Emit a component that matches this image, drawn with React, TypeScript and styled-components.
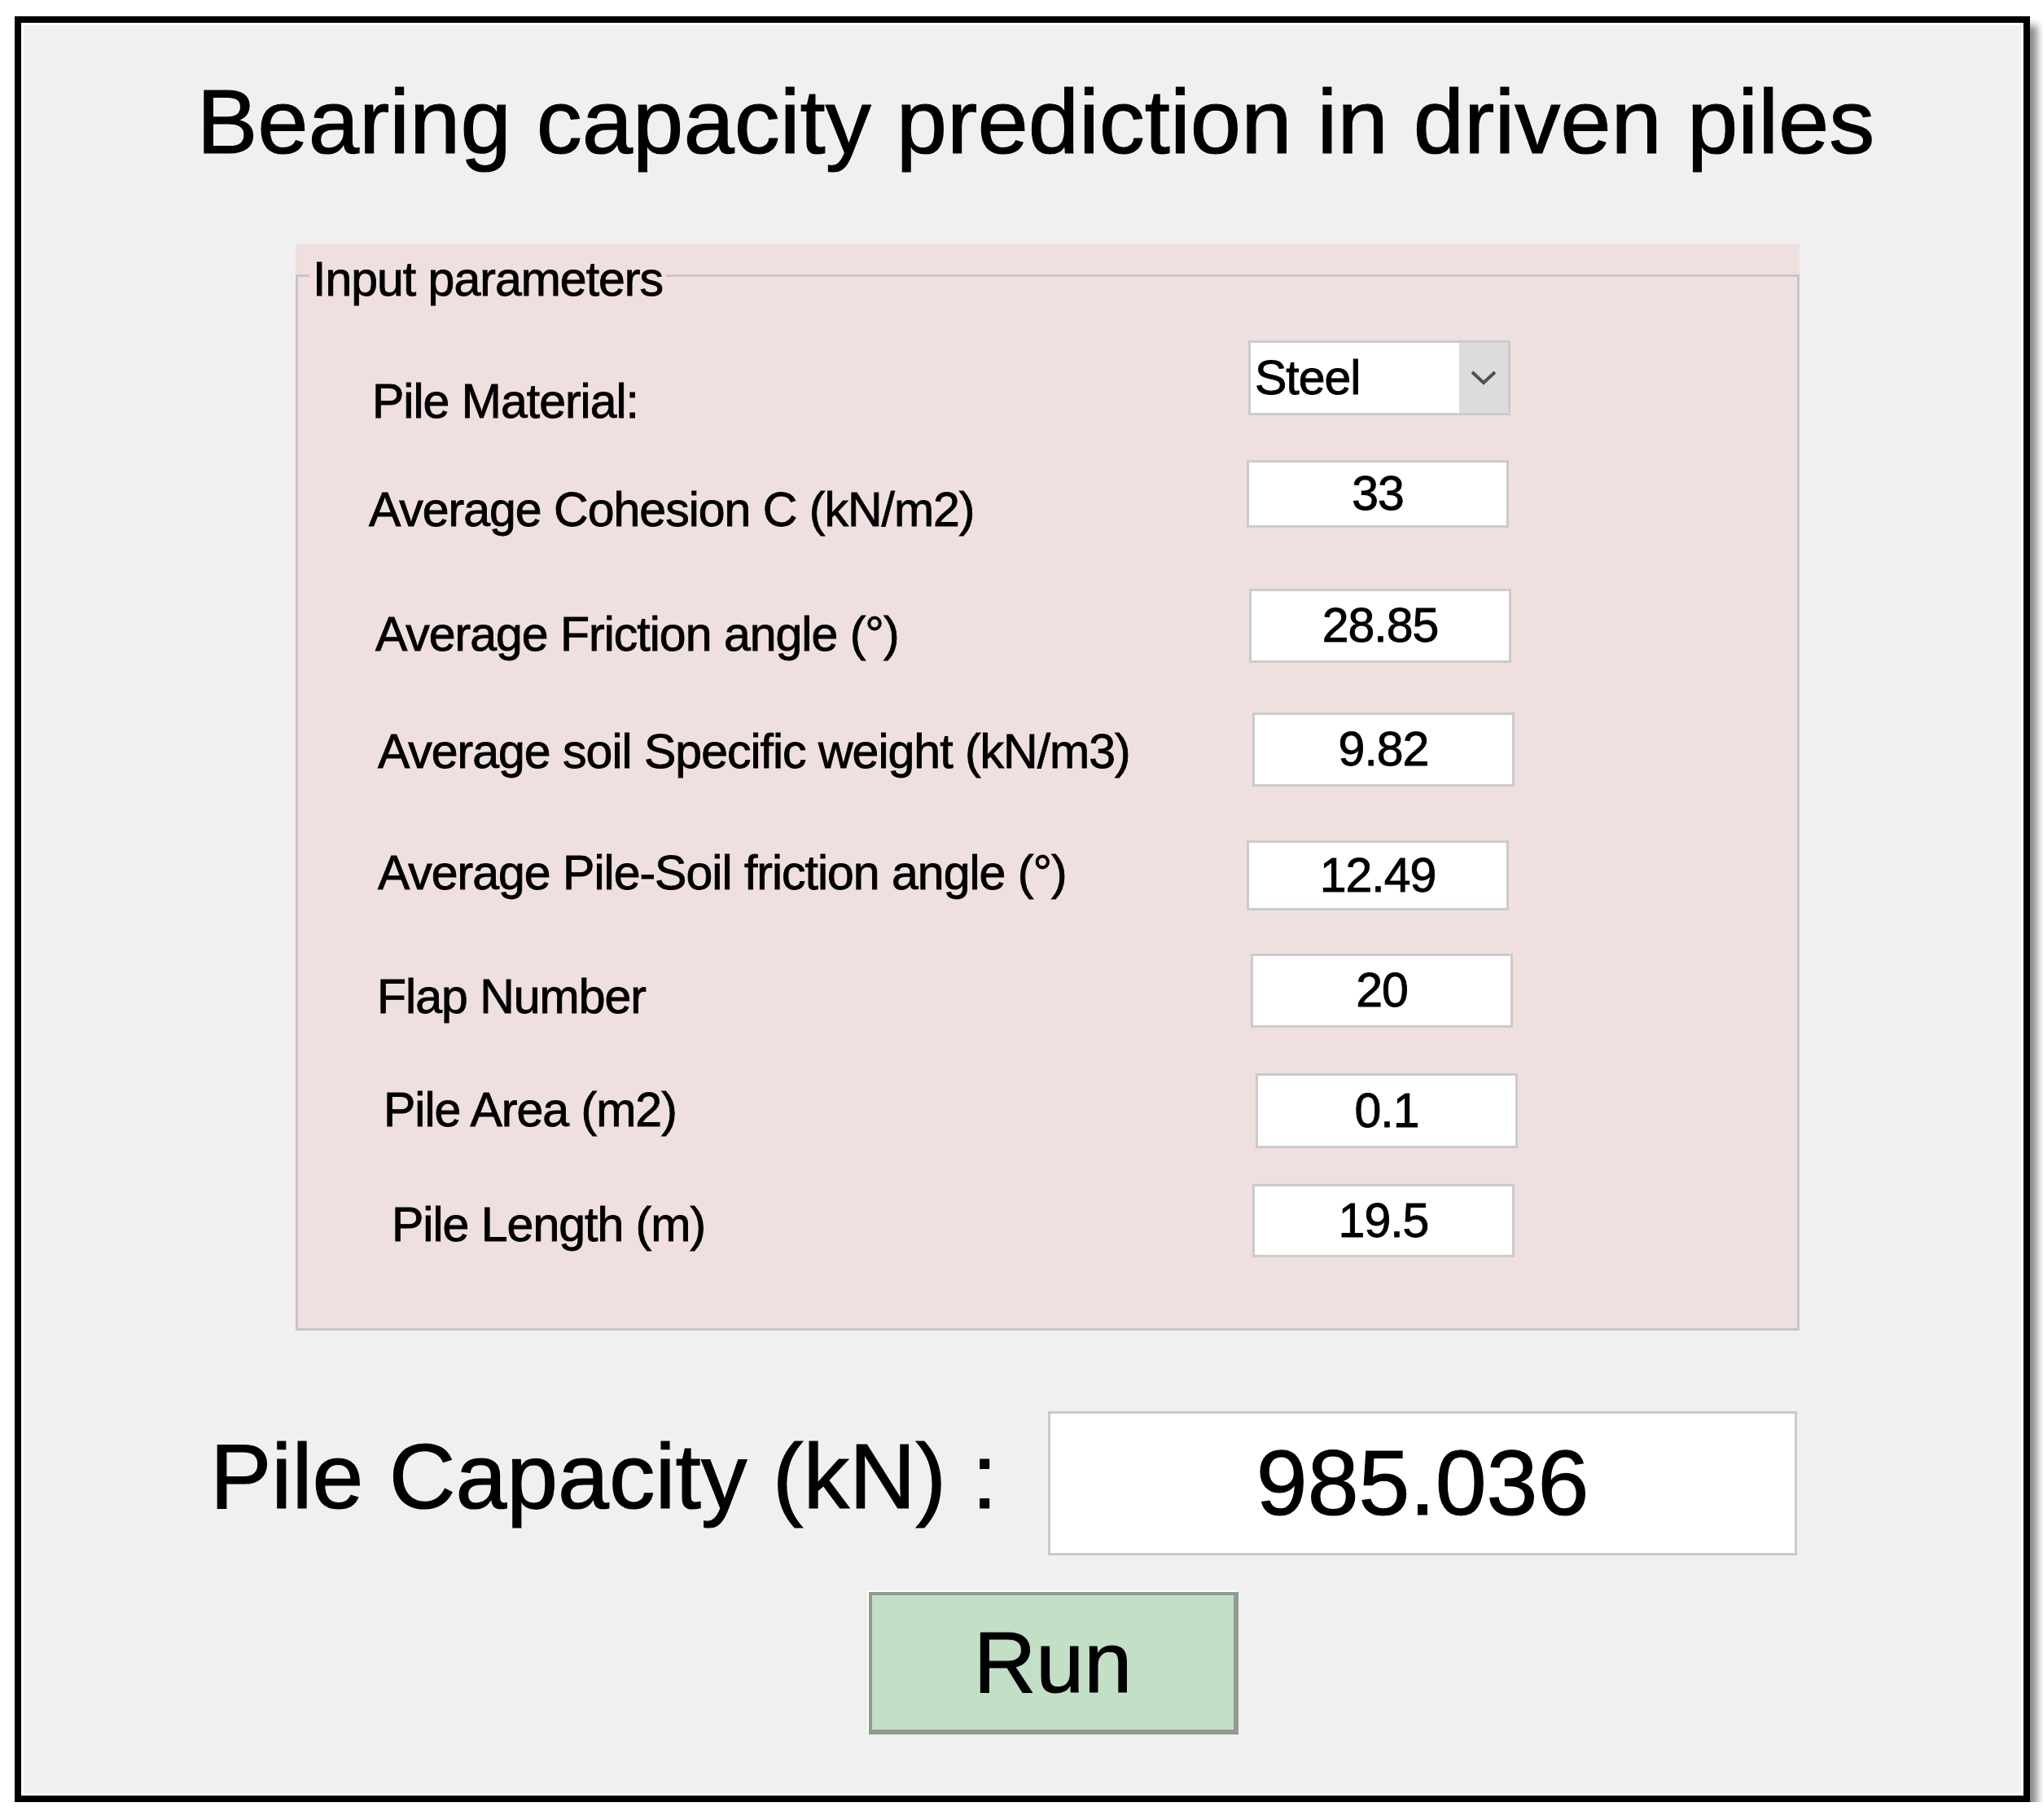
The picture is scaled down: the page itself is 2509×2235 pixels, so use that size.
import React from 'react';
import styled, { createGlobalStyle } from 'styled-components';

const GlobalStyle = createGlobalStyle`
    html, body {
        margin: 0;
        padding: 0;
        background: #ffffff;
    }
    body {
        font-family: "Liberation Sans", Arial, sans-serif;
        color: #000;
    }
`;

const Frame = styled.div`
    box-sizing: border-box;
    width: 2475px;
    margin: 20px 0 0 18px;
    border: 8px solid #000;
    box-shadow: 9px 11px 9px rgba(0, 0, 0, 0.45);
`;

const Inner = styled.div`
    border: 3px solid #fff;
    background: #f0f0f0;
    padding: 55px 0 72px 0;
    display: flex;
    flex-direction: column;
`;

const Title = styled.h1`
    margin: 0;
    padding-left: 33px;
    font-size: 112px;
    font-weight: normal;
    line-height: 128px;
    text-align: center;
    white-space: nowrap;
    -webkit-text-stroke: 1.2px #000;
`;

const Column = styled.div`
    margin-left: 334px;
    width: 1847px;
    display: flex;
    flex-direction: column;
`;

const Panel = styled.div`
    margin-top: 86px;
    background: #efdfdf;
`;

const Fieldset = styled.fieldset`
    margin: 0;
    min-width: 0;
    padding: 41px 0 87px 0;
    border: 3px solid #ccc5c5;
`;

const Legend = styled.legend`
    margin-left: 14px;
    padding: 9px 4px 0 4px;
    font-size: 59px;
    line-height: 68px;
    letter-spacing: -1px;
    -webkit-text-stroke: 0.9px #000;
`;

const Row = styled.div<{ $gap: number; $h: number }>`
    display: flex;
    align-items: flex-start;
    height: ${p => p.$h}px;
    margin-top: ${p => p.$gap}px;
`;

const Label = styled.div<{ $indent: number; $width: number; $drop: number }>`
    box-sizing: border-box;
    flex: none;
    width: ${p => p.$width}px;
    padding-left: ${p => p.$indent}px;
    margin-top: ${p => p.$drop}px;
    font-size: 59px;
    line-height: 68px;
    letter-spacing: -1px;
    white-space: nowrap;
    -webkit-text-stroke: 0.9px #000;
`;

const ValueBox = styled.div<{ $h: number }>`
    box-sizing: border-box;
    flex: none;
    width: 322px;
    height: ${p => p.$h}px;
    background: #fff;
    border: 3px solid #cbcbcb;
    font-size: 59px;
    line-height: ${p => p.$h - 6}px;
    letter-spacing: -1px;
    text-align: center;
    -webkit-text-stroke: 0.9px #000;
`;

const Select = styled.div<{ $h: number }>`
    box-sizing: border-box;
    flex: none;
    width: 322px;
    height: ${p => p.$h}px;
    background: #fff;
    border: 3px solid #cbcbcb;
    display: flex;
    font-size: 59px;
    letter-spacing: -1px;
    -webkit-text-stroke: 0.9px #000;
`;

const SelectText = styled.div`
    flex: 1;
    padding-left: 5px;
    display: flex;
    align-items: center;
`;

const SelectArrow = styled.div`
    width: 60px;
    background: #dcdcdc;
    display: flex;
    align-items: center;
    justify-content: center;
`;

const ResultRow = styled.div`
    margin-top: 99px;
    margin-left: -105px;
    display: flex;
    align-items: center;
    gap: 62px;
`;

const ResultLabel = styled.div`
    font-size: 113px;
    line-height: 130px;
    white-space: nowrap;
    margin-bottom: 18px;
    -webkit-text-stroke: 1.2px #000;
`;

const ResultBox = styled.div`
    box-sizing: border-box;
    width: 920px;
    height: 177px;
    background: #fff;
    border: 3px solid #c9c9c9;
    font-size: 113px;
    line-height: 171px;
    text-align: center;
    -webkit-text-stroke: 1.2px #000;
`;

const RunButton = styled.button`
    box-sizing: border-box;
    align-self: flex-start;
    margin: 45px 0 0 704px;
    width: 454px;
    height: 175px;
    padding: 0;
    background: #c3dfc6;
    border-style: solid;
    border-color: #8d9d8e;
    border-width: 4px 6px 6px 4px;
    box-shadow: -2px -2px 0 #ffffff;
    font-family: "Liberation Sans", Arial, sans-serif;
    font-size: 106px;
    color: #000;
    -webkit-text-stroke: 1.2px #000;
`;

type Param = {
    label: string;
    value: string;
    select?: boolean;
    gap: number;
    h: number;
    indent: number;
    boxX: number;
    drop: number;
};

const params: Param[] = [
    { label: 'Pile Material:', value: 'Steel', select: true, gap: 0, h: 92, indent: 91, boxX: 1533, drop: 41 },
    { label: 'Average Cohesion C (kN/m2)', value: '33', gap: 55, h: 83, indent: 87, boxX: 1531, drop: 27 },
    { label: 'Average Friction angle (°)', value: '28.85', gap: 75, h: 91, indent: 95, boxX: 1534, drop: 22 },
    { label: 'Average soil Specific weight (kN/m3)', value: '9.82', gap: 61, h: 91, indent: 98, boxX: 1538, drop: 14 },
    { label: 'Average Pile-Soil friction angle (°)', value: '12.49', gap: 66, h: 86, indent: 98, boxX: 1531, drop: 6 },
    { label: 'Flap Number', value: '20', gap: 53, h: 91, indent: 97, boxX: 1536, drop: 19 },
    { label: 'Pile Area (m2)', value: '0.1', gap: 56, h: 92, indent: 105, boxX: 1542, drop: 11 },
    { label: 'Pile Length (m)', value: '19.5', gap: 44, h: 90, indent: 115, boxX: 1538, drop: 16 },
];

// fieldset inner left edge, page x
const fieldLeft = 366;

const App: React.FC = () => {
    return (
        <>
            <GlobalStyle />
            <Frame>
                <Inner>
                    <Title>Bearing capacity prediction in driven piles</Title>
                    <Column>
                        <Panel>
                            <Fieldset>
                                <Legend>Input parameters</Legend>
                                {params.map(p => (
                                    <Row key={p.label} $gap={p.gap} $h={p.h}>
                                        <Label $indent={p.indent} $width={p.boxX - fieldLeft} $drop={p.drop}>
                                            {p.label}
                                        </Label>
                                        {p.select ? (
                                            <Select $h={p.h}>
                                                <SelectText>{p.value}</SelectText>
                                                <SelectArrow>
                                                    <svg width="32" height="18" viewBox="0 0 32 18">
                                                        <polyline points="2,2 16,15 30,2" fill="none" stroke="#505050" strokeWidth="4" />
                                                    </svg>
                                                </SelectArrow>
                                            </Select>
                                        ) : (
                                            <ValueBox $h={p.h}>{p.value}</ValueBox>
                                        )}
                                    </Row>
                                ))}
                            </Fieldset>
                        </Panel>
                        <ResultRow>
                            <ResultLabel>Pile Capacity (kN) :</ResultLabel>
                            <ResultBox>985.036</ResultBox>
                        </ResultRow>
                        <RunButton>Run</RunButton>
                    </Column>
                </Inner>
            </Frame>
        </>
    );
};

export default App;
